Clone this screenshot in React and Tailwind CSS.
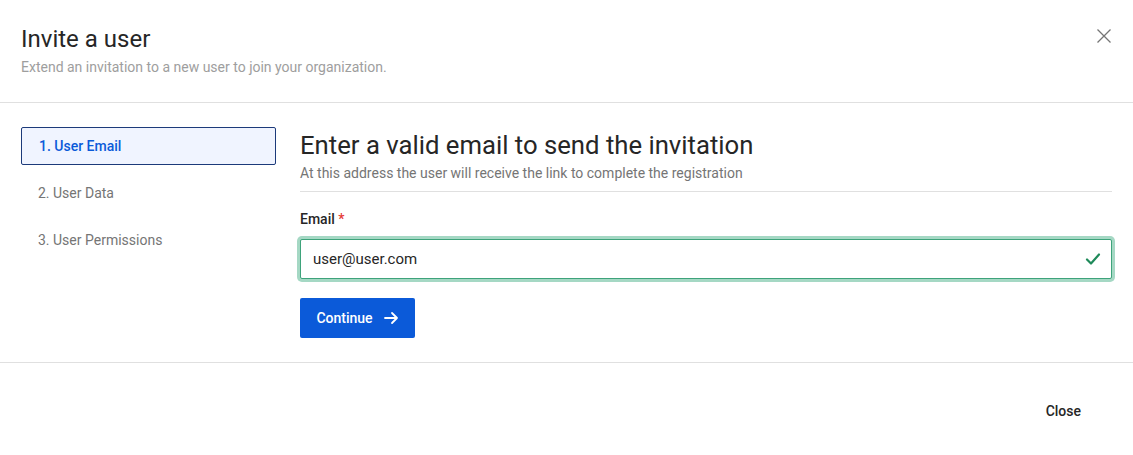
import React, { useState } from "react";

const steps = ["1. User Email", "2. User Data", "3. User Permissions"];

const InviteUser = () => {
  const [email, setEmail] = useState("user@user.com");
  const active = 0;

  return (
    <div className="w-[1133px] h-[455px] bg-white text-[#212121] font-['Roboto',sans-serif] flex flex-col">
      {/* Header */}
      <div className="h-[103px] border-b border-[#e0e0e0] flex justify-between pl-[21px] pr-[21px] pt-[24px]">
        <div>
          <h2 className="text-[24px] leading-[30px] text-[#262626]">Invite a user</h2>
          <p className="text-[14px] leading-[20px] text-[#9e9e9e] mt-[3px]">
            Extend an invitation to a new user to join your organization.
          </p>
        </div>
        <button className="w-[16px] h-[16px] mt-[4px] text-[#757575]">
          <svg viewBox="0 0 16 16" width="16" height="16" fill="none" stroke="currentColor" strokeWidth="1.3">
            <path d="M1.5 1.5 L14.5 14.5 M14.5 1.5 L1.5 14.5" />
          </svg>
        </button>
      </div>

      {/* Body */}
      <div className="h-[260px] border-b border-[#e0e0e0] flex pl-[21px] pr-[21px] pt-[24px]">
        <ul className="w-[255px] flex flex-col gap-[9px]">
          {steps.map((s, i) => (
            <li
              key={s}
              className={`h-[38px] flex items-center pl-[17px] text-[14px] rounded-[2px] ${
                i === active
                  ? "bg-[#f0f4ff] border border-[#1c3a7a] text-[#0b5ad9] font-medium"
                  : "text-[#757575]"
              }`}
            >
              {s}
            </li>
          ))}
        </ul>

        <div className="flex-1 ml-[24px] pt-[2px]">
          <h3 className="text-[25.7px] leading-[32px] text-[#262626]">Enter a valid email to send the invitation</h3>
          <p className="text-[14px] leading-[18px] text-[#757575] mt-[3px]">
            At this address the user will receive the link to complete the registration
          </p>
          <div className="border-t border-[#e0e0e0] mt-[9px]" />
          <label className="block text-[14px] font-medium text-[#262626] mt-[17px]">
            Email <span className="text-[#e53935]">*</span>
          </label>
          <div className="mt-[9px] h-[40px] bg-white border border-[#3ea37b] rounded-[2px] shadow-[0_0_0_3px_#a5d8c4] flex items-center pl-[12px] pr-[10px]">
            <input
              value={email}
              onChange={(e) => setEmail(e.target.value)}
              className="flex-1 outline-none text-[15px] text-[#262626] font-['Roboto',sans-serif]"
            />
            <svg viewBox="0 0 16 16" width="16" height="16" fill="none" stroke="#1f8a5a" strokeWidth="2.2" strokeLinecap="round" strokeLinejoin="round">
              <path d="M2 8.5 L6 12.5 L14 3.5" />
            </svg>
          </div>
          <button className="mt-[19px] h-[40px] w-[115px] bg-[#0b5ad9] rounded-[2px] text-white text-[14px] font-medium flex items-center justify-center gap-[10px]">
            Continue
            <svg viewBox="0 0 16 16" width="16" height="16" fill="none" stroke="currentColor" strokeWidth="1.8" strokeLinecap="round" strokeLinejoin="round">
              <path d="M2 8 H14 M9 3 L14 8 L9 13" />
            </svg>
          </button>
        </div>
      </div>

      {/* Footer */}
      <div className="flex-1 flex justify-end items-center pr-[52px] pt-[4px]">
        <button className="text-[14px] font-medium text-[#262626]">Close</button>
      </div>
    </div>
  );
};

export default InviteUser;
